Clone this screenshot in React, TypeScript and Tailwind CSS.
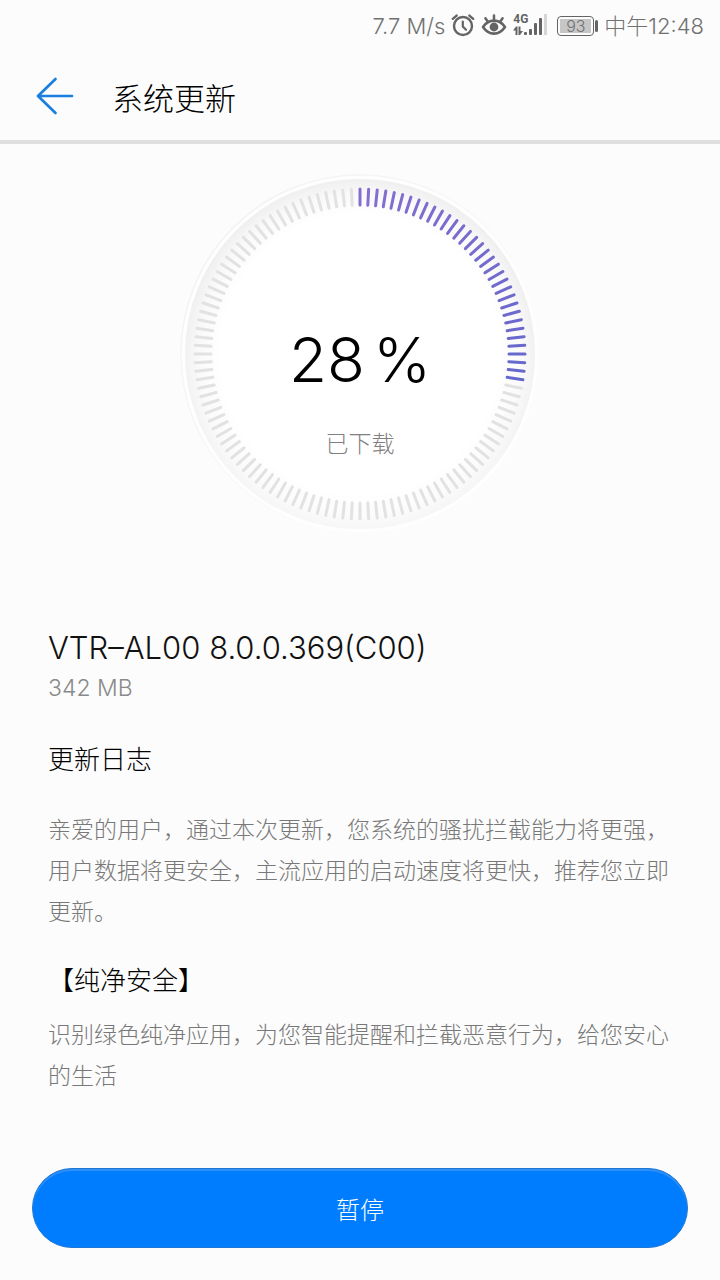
const TOTAL_TICKS = 120;

function AlarmIcon() {
  return (
    <svg width="24" height="24" viewBox="0 2 24 24" fill="none" stroke="#646464" strokeLinecap="round" aria-hidden="true">
      <circle cx="12" cy="14" r="9" strokeWidth="2.4" />
      <path d="M11.8 9.5v5l3.2 3.2" strokeWidth="2.2" />
      <path d="M1.8 6.8 5.6 3.6M18.4 3.6 22.2 6.8" strokeWidth="2.4" />
    </svg>
  );
}

function EyeIcon() {
  return (
    <svg width="26" height="24" viewBox="0 2 26 24" fill="none" stroke="#646464" strokeLinecap="round" aria-hidden="true">
      <path d="M2 15C5 10.5 9 8.6 13 8.6S21 10.5 24 15c-3 4.4-7 6.6-11 6.6S5 19.4 2 15Z" strokeWidth="2.6" strokeLinejoin="round" />
      <circle cx="13" cy="15" r="4.4" fill="#646464" stroke="none" />
      <path d="M13 3.5v5M4.4 6.2l2.2 3M21.6 6.2l-2.2 3" strokeWidth="2.5" />
    </svg>
  );
}

function SignalIcon() {
  return (
    <div className="relative h-6 w-[38px]">
      <span className="absolute left-0 top-0 font-[Roboto] text-[12px] leading-[10px] font-bold text-[#646464]">4G</span>
      <svg width="38" height="24" viewBox="0 0 38 24" fill="#646464" aria-hidden="true">
        <path d="M0 16.5 3 12.5H4.5V21H2.5V16.5ZM5.5 12.5H7.5V17H10L7 21H5.5Z" />
        <rect x="11" y="18" width="3" height="3" rx="1" />
        <rect x="16" y="15" width="3" height="6" rx="1" />
        <rect x="21" y="9" width="3" height="12" rx="1" />
        <rect x="26" y="4" width="3" height="17" rx="1" />
        <rect x="31" y="0" width="3" height="21" fill="#d6d6d6" />
      </svg>
    </div>
  );
}

function Battery({ level }: { level: number }) {
  return (
    <div className="flex items-center gap-px">
      <div className="flex h-5 w-[37px] rounded-[4px] border border-[#646464] p-0.5">
        <div className="flex flex-1 items-center justify-center bg-[#c6c6c6] text-[16px] leading-4">{level}</div>
      </div>
      <div className="h-3 w-[3px] rounded-sm bg-[#646464]" />
    </div>
  );
}

function StatusBar() {
  return (
    <div className="flex h-[52px] items-center justify-end gap-1.5 px-4 text-[22px] leading-6 text-[#717171]">
      <span>7.7 M/s</span>
      <AlarmIcon />
      <EyeIcon />
      <SignalIcon />
      <Battery level={93} />
      <span>中午12:48</span>
    </div>
  );
}

function tickColor(i: number, active: number) {
  if (i >= active) return '#e2e2e2';
  const t = i / active;
  return `rgb(${Math.round(134 - 34 * t)}, ${Math.round(110 - 6 * t)}, ${Math.round(208 - 4 * t)})`;
}

function ProgressDial({ percent }: { percent: number }) {
  const active = Math.ceil((percent / 100) * TOTAL_TICKS);

  return (
    <div className="relative size-[360px]">
      <svg viewBox="0 0 360 360" className="size-full" aria-hidden="true">
        <defs>
          <radialGradient id="track" gradientUnits="userSpaceOnUse" cx="180" cy="180" r="175">
            <stop offset="0.8" stopColor="#ffffff" />
            <stop offset="0.92" stopColor="#f9f9f9" />
            <stop offset="1" stopColor="#efefef" />
          </radialGradient>
          <linearGradient id="rim" x1="0" y1="0" x2="1" y2="1">
            <stop offset="0" stopColor="#f0f0f0" />
            <stop offset="0.7" stopColor="#fcfcfc" />
          </linearGradient>
          <linearGradient id="fade" x1="0" y1="0" x2="0" y2="1">
            <stop offset="0.3" stopColor="#ffffff" stopOpacity="0" />
            <stop offset="1" stopColor="#ffffff" stopOpacity="0.5" />
          </linearGradient>
        </defs>
        <circle cx="180" cy="180" r="179" fill="#fefefe" stroke="url(#rim)" strokeWidth="1.5" />
        <circle cx="180" cy="180" r="175" fill="url(#track)" />
        <circle cx="180" cy="180" r="175" fill="url(#fade)" />
        {Array.from({ length: TOTAL_TICKS }, (_, i) => (
          <line
            key={i}
            x1="180"
            y1="15"
            x2="180"
            y2="31"
            stroke={tickColor(i, active)}
            strokeWidth="3"
            strokeLinecap="round"
            transform={`rotate(${(i * 360) / TOTAL_TICKS} 180 180)`}
          />
        ))}
      </svg>
      <div className="absolute inset-0 flex flex-col items-center pt-[150px]">
        <p className="flex gap-2 text-[62px] leading-[72px] text-black">
          <span>{percent}</span>
          <span>%</span>
        </p>
        <p className="mt-8 text-[23px] leading-8 text-[#808080]">已下载</p>
      </div>
    </div>
  );
}

export default function App() {
  return (
    <div className="flex min-h-screen flex-col bg-[#fcfcfc] font-[Inter,'Noto_Sans_CJK_SC',sans-serif] font-light">
      <StatusBar />
      <header className="flex h-[92px] items-center gap-[38px] border-b-4 border-[#dfdfdf] px-9">
        <button type="button" aria-label="返回">
          <svg width="38" height="38" viewBox="0 0 38 38" fill="none" stroke="#1a7fe0" strokeWidth="2.7" strokeLinecap="round" strokeLinejoin="round">
            <path d="M19.5 2 2 19l17.5 17M2.5 19H36" />
          </svg>
        </button>
        <h1 className="pt-1.5 text-[31px] leading-10 text-black">系统更新</h1>
      </header>

      <main className="flex flex-1 flex-col px-12 pt-[30px]">
        <div className="flex justify-center">
          <ProgressDial percent={28} />
        </div>

        <h2 className="mt-[94px] text-[31px] leading-10 text-[#111]">VTR–AL00 8.0.0.369(C00)</h2>
        <p className="mt-1 text-[23px] leading-8 text-[#8a8a8a]">342 MB</p>

        <h3 className="mt-9 text-[26px] leading-10 text-black">更新日志</h3>
        <p className="mt-[30px] -mr-3 text-[23px] leading-[41px] text-[#787878]">
          亲爱的用户，通过本次更新，您系统的骚扰拦截能力将更强，用户数据将更安全，主流应用的启动速度将更快，推荐您立即更新。
        </p>

        <h3 className="mt-7 text-[26px] leading-10 text-black">【纯净安全】</h3>
        <p className="mt-[14px] -mr-3 text-[23px] leading-[41px] text-[#787878]">
          识别绿色纯净应用，为您智能提醒和拦截恶意行为，给您安心的生活
        </p>
      </main>

      <footer className="px-8 pb-8">
        <button
          type="button"
          className="h-20 w-full rounded-full border border-[#1f78d6] bg-[#007dff] pt-1.5 text-[24px] leading-8 text-white shadow-[inset_0_2px_0_#2f8ff5]"
        >
          暂停
        </button>
      </footer>
    </div>
  );
}
